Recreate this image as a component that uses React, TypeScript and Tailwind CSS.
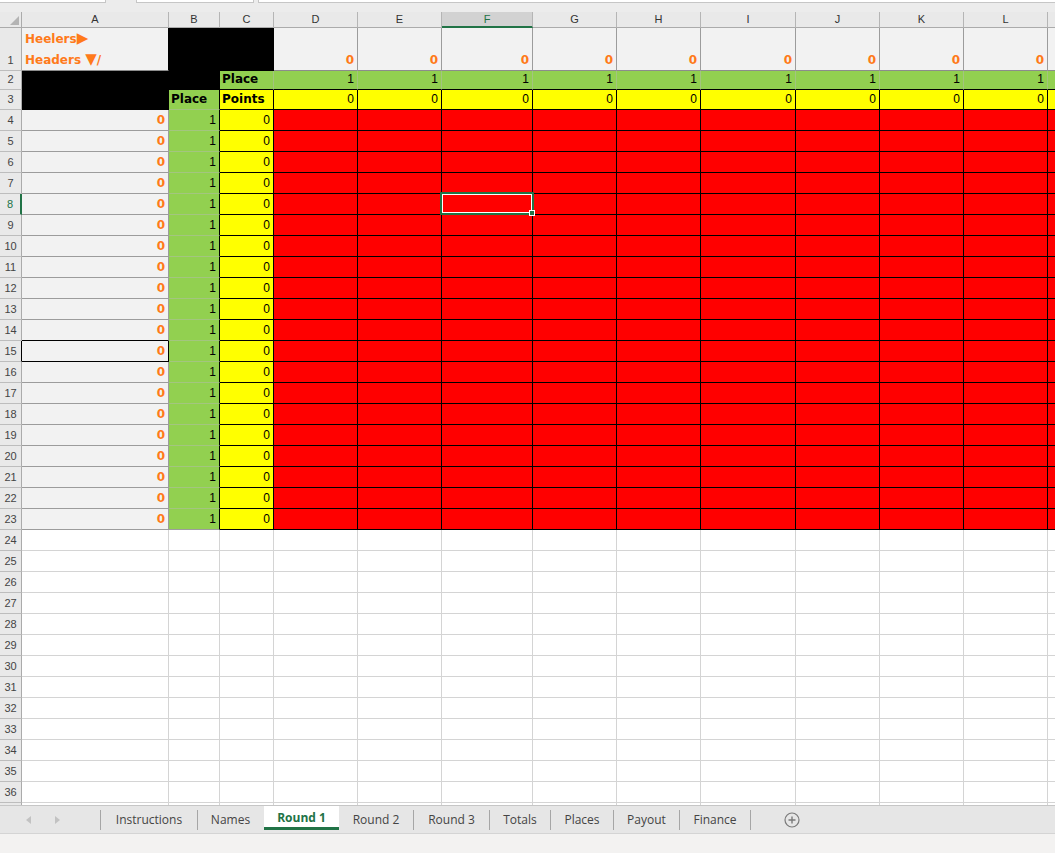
import type { ReactNode } from 'react'

const COLS = ['A', 'B', 'C', 'D', 'E', 'F', 'G', 'H', 'I', 'J', 'K', 'L', 'M']
const WIDTHS = [
  'w-[147px]', 'w-[51px]', 'w-[54px]', 'w-[84px]', 'w-[84px]', 'w-[91px]', 'w-[84px]',
  'w-[84px]', 'w-[95px]', 'w-[84px]', 'w-[84px]', 'w-[84px]', 'w-[8px]',
]
const ROWS = Array.from({ length: 37 }, (_, i) => i + 1)

const rowHeight = (r: number) =>
  r === 1 ? 'h-[43px]' : r === 2 ? 'h-[19px]' : r === 3 ? 'h-[20px]' : 'h-[21px]'

const label = "font-['DejaVu_Sans',sans-serif] font-bold text-[12px] text-black"
const orangeZero = (
  <span className="font-['DejaVu_Sans',sans-serif] font-bold text-[12px] text-[#ff7a1a]">0</span>
)

type Spec = { cls: string; content?: ReactNode }

function spec(r: number, c: number): Spec {
  if (r === 1) {
    if (c === 0)
      return {
        cls: 'bg-[#f2f2f2] border-r-black border-b-[#8c8c8c] flex-col !items-start !justify-end !pb-0 pl-[3px]',
        content: (
          <div className="font-['DejaVu_Sans',sans-serif] font-bold text-[12px] leading-[20px] text-[#ff7a1a]">
            <div>
              Heelers<span className="text-[15px] leading-[20px]">▶</span>
            </div>
            <div>
              Headers <span className="text-[15px] leading-[20px]">▼</span>/
            </div>
          </div>
        ),
      }
    if (c === 1 || c === 2) return { cls: 'bg-black border-r-black border-b-black' }
    return { cls: 'bg-[#f2f2f2] border-r-[#9c9c9c] border-b-[#8c8c8c] justify-end', content: orangeZero }
  }
  if (r === 2) {
    if (c <= 1) return { cls: 'bg-black border-r-black border-b-black' }
    if (c === 2)
      return {
        cls: 'bg-[#92d050] border-r-[#a3c57f] border-b-black justify-start pl-[2px]',
        content: <span className={label}>Place</span>,
      }
    return { cls: 'bg-[#92d050] border-r-[#a3c57f] border-b-black justify-end', content: '1' }
  }
  if (r === 3) {
    if (c === 0) return { cls: 'bg-black border-r-black border-b-black' }
    if (c === 1)
      return {
        cls: 'bg-[#92d050] border-r-black border-b-[#a3c57f] justify-start pl-[2px]',
        content: <span className={label}>Place</span>,
      }
    if (c === 2)
      return {
        cls: 'bg-[#ffff00] border-r-black border-b-black justify-start pl-[2px]',
        content: <span className={label}>Points</span>,
      }
    return { cls: 'bg-[#ffff00] border-r-black border-b-black justify-end', content: '0' }
  }
  if (r <= 23) {
    if (c === 0) {
      if (r === 14) return { cls: 'bg-[#f2f2f2] border-r-[#9c9c9c] border-b-black justify-end', content: orangeZero }
      if (r === 15) return { cls: 'bg-[#f2f2f2] border-r-black border-b-black justify-end', content: orangeZero }
      return { cls: 'bg-[#f2f2f2] border-r-[#9c9c9c] border-b-[#9c9c9c] justify-end', content: orangeZero }
    }
    if (c === 1) {
      if (r === 23) return { cls: 'bg-[#92d050] border-r-black border-b-[#9c9c9c] justify-end', content: '1' }
      return { cls: 'bg-[#92d050] border-r-black border-b-[#a3c57f] justify-end', content: '1' }
    }
    if (c === 2) return { cls: 'bg-[#ffff00] border-r-black border-b-black justify-end', content: '0' }
    return { cls: 'bg-[#ff0000] border-r-black border-b-black' }
  }
  return { cls: 'bg-white border-r-[#d4d4d4] border-b-[#d4d4d4]' }
}

function RowHeader({ r }: { r: number }) {
  if (r === 8)
    return (
      <div className="w-[22px] shrink-0 box-border border-r-2 border-b border-r-[#217346] border-b-[#bdbdbd] bg-[#e9e9e9] flex items-end justify-center pb-[3px] leading-[14px] text-[11px] text-[#217346]">
        {r}
      </div>
    )
  if (r === 15)
    return (
      <div className="w-[22px] shrink-0 box-border border-r border-b border-r-black border-b-[#bdbdbd] bg-[#e9e9e9] flex items-end justify-center pb-[3px] leading-[14px] text-[11px] text-[#444]">
        {r}
      </div>
    )
  return (
    <div className="w-[22px] shrink-0 box-border border-r border-b border-r-[#ababab] border-b-[#bdbdbd] bg-[#e9e9e9] flex items-end justify-center pb-[3px] leading-[14px] text-[11px] text-[#444]">
      {r}
    </div>
  )
}

function Selection() {
  return (
    <div className="absolute -top-[2px] -left-[2px] -right-[2px] -bottom-[1px] z-10 border-2 border-[#217346]">
      <div className="w-full h-full border border-white" />
      <div className="absolute -right-[3px] -bottom-[3px] w-[6px] h-[6px] bg-[#217346] border border-white" />
    </div>
  )
}

function Sheet() {
  return (
    <div className="h-[793px] overflow-hidden bg-white font-['Liberation_Sans',Arial,sans-serif]">
      <div className="flex h-[16px]">
        <div className="w-[22px] shrink-0 box-border border-r border-b border-[#ababab] bg-[#e9e9e9] flex items-end justify-end pr-[2px] pb-[2px]">
          <svg width="9" height="9" viewBox="0 0 9 9">
            <polygon points="9,0 9,9 0,9" fill="#b4b4b4" />
          </svg>
        </div>
        {COLS.map((col, c) =>
          col === 'F' ? (
            <div
              key={col}
              className={`${WIDTHS[c]} shrink-0 box-border border-r border-b-2 border-r-[#b5b5b5] border-b-[#217346] bg-[#d2d2d2] flex items-center justify-center text-[11px] text-[#217346]`}
            >
              {col}
            </div>
          ) : (
            <div
              key={col}
              className={`${WIDTHS[c]} shrink-0 box-border border-r border-b border-r-[#b5b5b5] border-b-[#ababab] bg-[#e9e9e9] flex items-center justify-center text-[11px] text-[#333]`}
            >
              {col === 'M' ? null : col}
            </div>
          ),
        )}
      </div>
      {ROWS.map((r) => (
        <div key={r} className={`flex ${rowHeight(r)}`}>
          <RowHeader r={r} />
          {COLS.map((col, c) => {
            const s = spec(r, c)
            return (
              <div
                key={col}
                className={`${WIDTHS[c]} shrink-0 box-border border-r border-b flex items-end pb-[3px] pr-[3px] leading-[14px] text-[12px] text-black relative ${s.cls}`}
              >
                {col === 'M' ? null : s.content}
                {r === 8 && col === 'F' && <Selection />}
              </div>
            )
          })}
        </div>
      ))}
    </div>
  )
}

const TABS = [
  { name: 'Instructions', w: 'w-[96px]' },
  { name: 'Names', w: 'w-[65px]' },
  { name: 'Round 1', w: 'w-[75px]', active: true },
  { name: 'Round 2', w: 'w-[74px]' },
  { name: 'Round 3', w: 'w-[75px]' },
  { name: 'Totals', w: 'w-[60px]' },
  { name: 'Places', w: 'w-[62px]' },
  { name: 'Payout', w: 'w-[65px]' },
  { name: 'Finance', w: 'w-[70px]' },
]

function Sep() {
  return <div className="w-px h-[20px] bg-[#a6a6a6] shrink-0" />
}

function TabBar() {
  return (
    <div className="h-[28px] box-border border-t border-[#c6c6c6] bg-[#e6e6e6] flex items-center font-['Open_Sans',sans-serif] text-[12px] text-[#444]">
      <div className="w-[100px] shrink-0 flex items-center">
        <svg className="ml-[26px]" width="5" height="8" viewBox="0 0 5 8">
          <polygon points="5,0 5,8 0,4" fill="#c2c2c2" />
        </svg>
        <svg className="ml-[24px]" width="5" height="8" viewBox="0 0 5 8">
          <polygon points="0,0 0,8 5,4" fill="#c2c2c2" />
        </svg>
      </div>
      <Sep />
      {TABS.map((t, i) =>
        t.active ? (
          <div
            key={t.name}
            className={`${t.w} shrink-0 self-start h-[24px] box-border bg-white border-b-[3px] border-[#217346] flex items-center justify-center pt-[2px] font-bold text-[#217346]`}
          >
            {t.name}
          </div>
        ) : (
          <div key={t.name} className="flex items-center">
            <div className={`${t.w} shrink-0 text-center`}>{t.name}</div>
            {!(TABS[i + 1] && TABS[i + 1].active) && <Sep />}
            {TABS[i + 1] && TABS[i + 1].active && <div className="w-px" />}
          </div>
        ),
      )}
      <svg className="ml-[33px]" width="16" height="16" viewBox="0 0 16 16">
        <circle cx="8" cy="8" r="7" fill="none" stroke="#7a7a7a" strokeWidth="1.2" />
        <path d="M8 4.5v7M4.5 8h7" stroke="#7a7a7a" strokeWidth="1.4" />
      </svg>
    </div>
  )
}

export default function App() {
  return (
    <div className="w-[1055px] h-[853px] overflow-hidden bg-[#e9e9e9] flex flex-col">
      <div className="h-[12px] shrink-0 bg-[#ececec] flex items-start">
        <div className="w-[106px] h-[3px] box-border bg-white border-r border-b border-[#c6c6c6]" />
        <div className="w-[30px]" />
        <div className="w-[118px] h-[3px] box-border bg-white border-l border-r border-b border-[#c6c6c6]" />
        <div className="w-[4px]" />
        <div className="flex-1 h-[3px] box-border bg-white border-l border-b border-[#c6c6c6]" />
      </div>
      <Sheet />
      <TabBar />
      <div className="h-[20px] shrink-0 box-border border-t border-[#d4d4d4] bg-[#f3f2f1]" />
    </div>
  )
}
